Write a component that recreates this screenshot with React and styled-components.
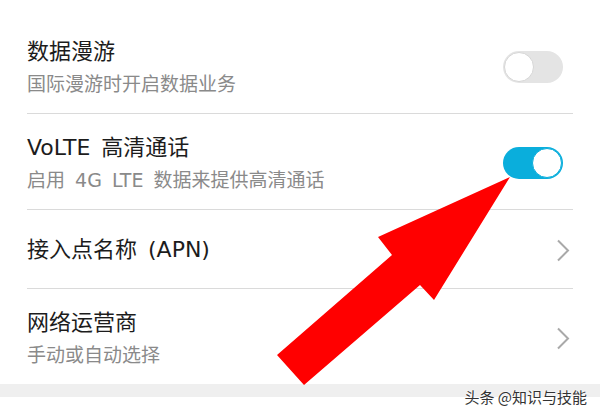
import React from "react";
import styled, { createGlobalStyle } from "styled-components";

const Global = createGlobalStyle`
  html, body { margin: 0; padding: 0; background: #ffffff; }
  body { font-family: "Noto Sans CJK SC", "Noto Sans", sans-serif; }
`;

const Screen = styled.div`
  position: relative;
  width: 600px;
  height: 417px;
  overflow: hidden;
  background: #ffffff;
  display: flex;
  flex-direction: column;
`;

const List = styled.div`
  display: flex;
  flex-direction: column;
  margin: 18px 27px 0;
`;

const Row = styled.div`
  display: flex;
  align-items: center;
  justify-content: space-between;
  padding: ${(p) => (p.$single ? "25px 0 23px" : "19px 0 16px")};
  border-bottom: ${(p) => (p.$last ? "none" : "1px solid #dadada")};
`;

const Texts = styled.div`
  display: flex;
  flex-direction: column;
  font-family: "DejaVu Sans", "Noto Sans CJK SC", sans-serif;
`;

const Title = styled.div`
  font-size: 22px;
  line-height: 30px;
  color: #1c1c1c;
  font-weight: 400;
  word-spacing: 4px;
`;

const Sub = styled.div`
  margin-top: 4px;
  font-size: 19px;
  line-height: 26px;
  color: #8a8a8a;
  font-weight: 400;
  word-spacing: 4px;
`;

const Track = styled.div`
  width: 60px;
  height: 32px;
  margin-right: 10px;
  border-radius: 16px;
  background: ${(p) => (p.$on ? "#0aaedc" : "#e4e4e4")};
  display: flex;
  align-items: center;
  justify-content: ${(p) => (p.$on ? "flex-end" : "flex-start")};
  padding: 0 1px;
  box-sizing: border-box;
  flex-shrink: 0;
`;

const Knob = styled.div`
  width: 28px;
  height: 28px;
  border-radius: 50%;
  background: #ffffff;
  border: 1.5px solid ${(p) => (p.$on ? "#0aaedc" : "#d6d6d6")};
  box-sizing: content-box;
`;

const ChevronIcon = styled.svg`
  flex-shrink: 0;
  margin-right: 3px;
`;

const Band = styled.div`
  height: 13px;
  background: #efefef;
`;

const Watermark = styled.div`
  position: absolute;
  right: 13px;
  bottom: 11px;
  font-size: 15px;
  line-height: 18px;
  color: #333333;
  text-shadow: 0 0 2px #ffffff, 0 0 2px #ffffff;
  white-space: nowrap;
`;

const ArrowLayer = styled.svg`
  position: absolute;
  left: 0;
  top: 0;
  width: 600px;
  height: 417px;
  pointer-events: none;
`;

function Toggle({ on }) {
  return (
    <Track $on={on}>
      <Knob $on={on} />
    </Track>
  );
}

function Chevron() {
  return (
    <ChevronIcon width="14" height="23" viewBox="0 0 14 23">
      <polyline points="2,1.5 12,11.5 2,21.5" fill="none" stroke="#a9a9a9" strokeWidth="2" />
    </ChevronIcon>
  );
}

export default function App() {
  return (
    <>
      <Global />
      <Screen>
        <List>
          <Row>
            <Texts>
              <Title>数据漫游</Title>
              <Sub>国际漫游时开启数据业务</Sub>
            </Texts>
            <Toggle on={false} />
          </Row>
          <Row>
            <Texts>
              <Title>VoLTE 高清通话</Title>
              <Sub>启用 4G LTE 数据来提供高清通话</Sub>
            </Texts>
            <Toggle on={true} />
          </Row>
          <Row $single>
            <Texts>
              <Title>接入点名称 (APN)</Title>
            </Texts>
            <Chevron />
          </Row>
          <Row $last>
            <Texts>
              <Title>网络运营商</Title>
              <Sub>手动或自动选择</Sub>
            </Texts>
            <Chevron />
          </Row>
        </List>
        <Band />
        <ArrowLayer viewBox="0 0 600 417">
          <polygon
            points="510,177 434,300 420,285 304,385 277,355 392,255 378,237"
            fill="#ff0000"
          />
        </ArrowLayer>
        <Watermark>头条 @知识与技能</Watermark>
      </Screen>
    </>
  );
}
